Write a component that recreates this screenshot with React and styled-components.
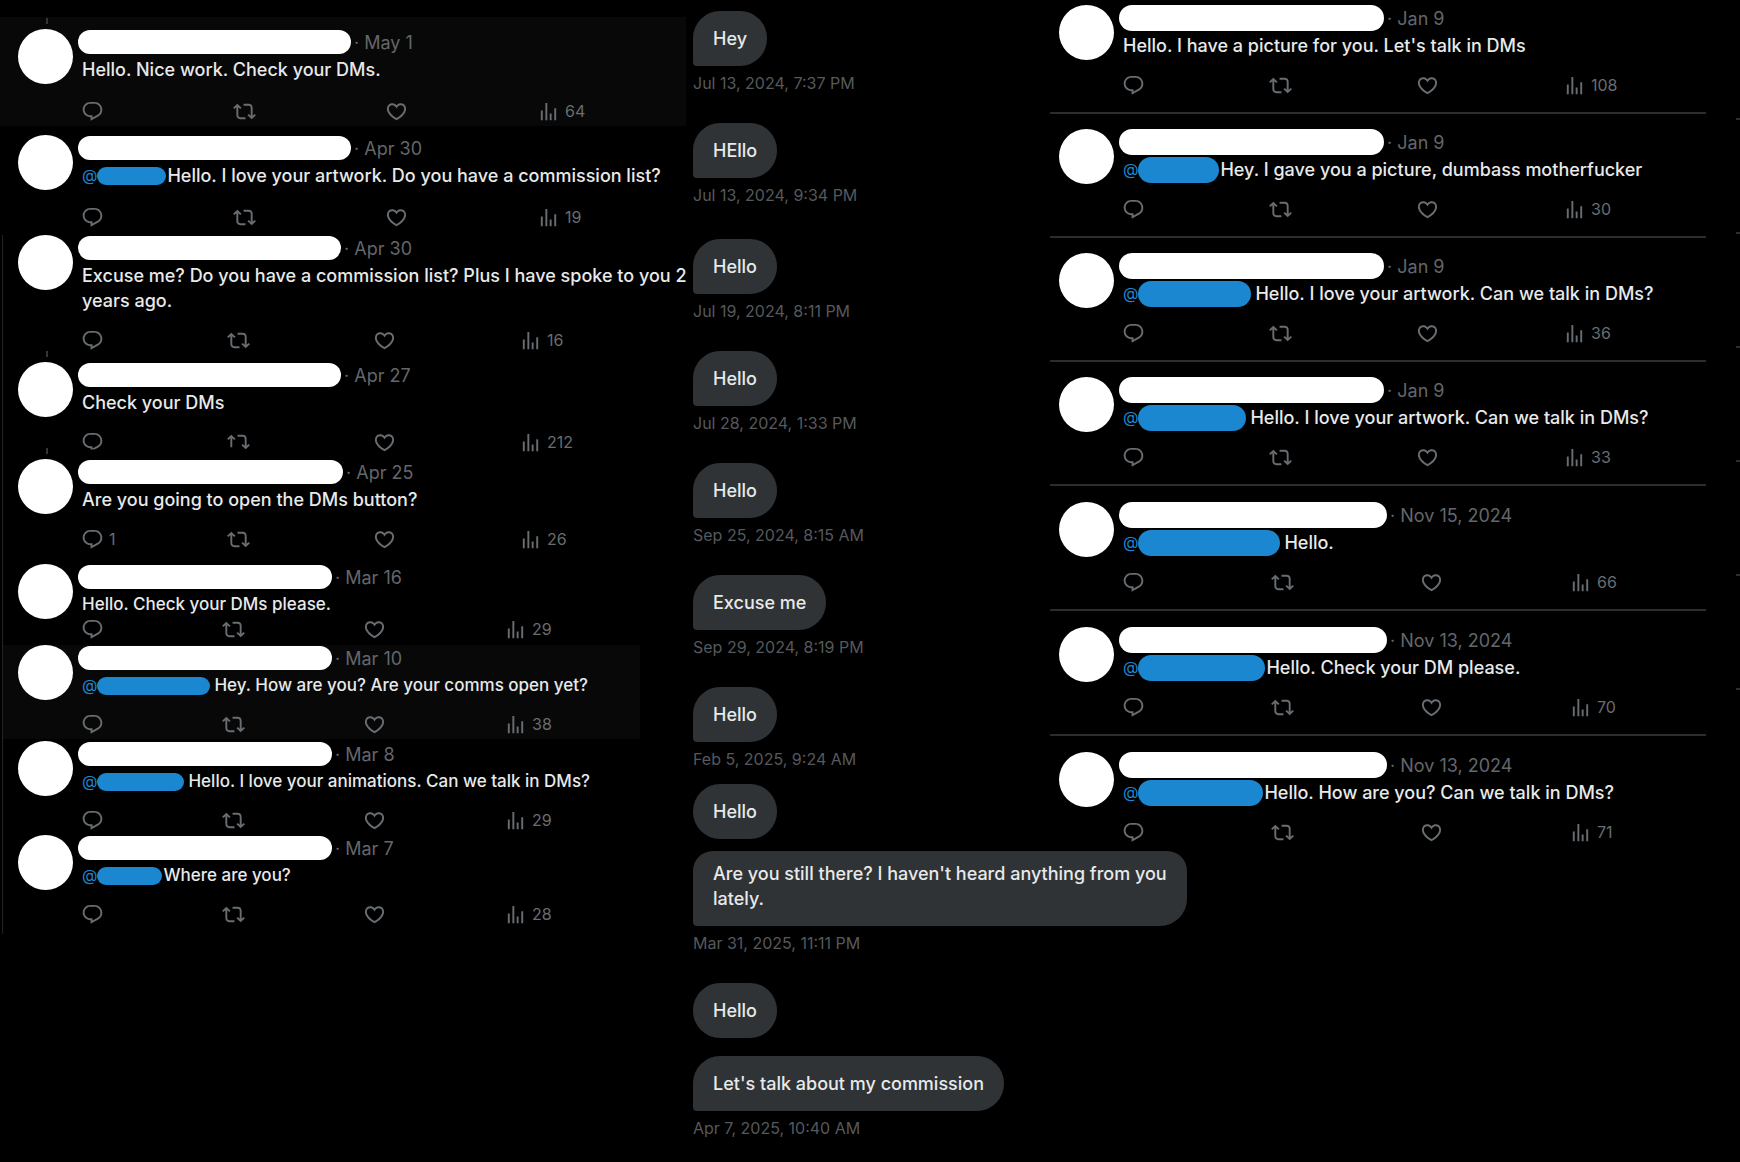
import React from 'react'
import styled, { createGlobalStyle, css } from 'styled-components';

const GlobalStyle = createGlobalStyle`
  * {
    box-sizing: border-box;
  }

  body {
    margin: 0;
    background: #000;
    color: #e7e9ea;
    font-family: Inter, "Liberation Sans", sans-serif;
  }
`;

const Page = styled.main`
  display: grid;
  grid-template-columns: minmax(0, 686fr) minmax(0, 357fr) minmax(0, 663fr) 34px;
  align-items: start;
  min-height: 100vh;
  overflow: hidden;
`;

const Thread = styled.section`
  display: flex;
  flex-direction: column;
  padding-top: 17px;
`;

const ReplyList = styled.section`
  display: flex;
  flex-direction: column;
  padding: 5px 0 0 7px;
`;

/* thin rule left of the older replies */
const Rail = styled.div`
  display: flex;
  flex-direction: column;
  margin-left: 2px;
  padding-bottom: 5px;
  border-left: 1px solid #202327;
`;

const TweetRow = styled.article`
  display: flex;
  align-items: flex-start;
  padding: ${props => props.$top || 0}px 0 3px ${props => props.$left}px;
  margin-bottom: ${props => props.$after || 0}px;
  margin-right: ${props => props.$short ? "46px" : "0"};
  background: ${props => props.$lit ? "#080808" : "transparent"};
  font-size: ${props => props.$size}px;
  font-weight: 500;

  ${props => props.$divided && css`
    padding-bottom: 15px;
    border-bottom: 2px solid #2a2e31;
  `}
`;

const Avatar = styled.div`
  position: relative;
  flex: none;
  width: 55px;
  height: 55px;
  margin-right: 5px;
  border-radius: 50%;
  background: #fff;

  ${props => props.$linked && css`
    &::before {
      content: "";
      position: absolute;
      left: 28px;
      bottom: 60px;
      width: 2px;
      height: 6px;
      background: #333639;
    }
  `}
`;

const Body = styled.div`
  flex: 1;
  min-width: 0;
`;

const Header = styled.header`
  display: flex;
  align-items: center;
  gap: 3px;
  height: 26px;
  margin-bottom: 2px;
`;

const NameBar = styled.span`
  width: ${props => props.$width}px;
  height: ${props => props.$tall ? "26px" : "24px"};
  border-radius: 13px;
  background: #fff;
`;

const Posted = styled.time`
  color: #63676b;
  font-size: 18px;
  font-weight: 400;
`;

const Text = styled.p`
  margin: 0 -6px 0 0;
  padding-left: 4px;
  line-height: 25px;
`;

const Mention = styled.a`
  display: inline-flex;
  align-items: center;
  height: 25px;
  margin-right: ${props => props.$spaced ? "4px" : "1px"};
  vertical-align: top;
  color: #1a87d0;
  font-size: 16px;
  font-weight: 400;
  text-decoration: none;
`;

const MentionBar = styled.span`
  width: ${props => props.$width}px;
  height: ${props => props.$tall ? "26px" : "18px"};
  border-radius: 13px;
  background: #1a87d0;
`;

const Actions = styled.div`
  display: grid;
  grid-template-columns: repeat(3, ${props => props.$step}px) auto;
  height: 24px;
  margin-top: ${props => props.$space}px;
  padding-left: 3px;
`;

const Action = styled.button`
  display: flex;
  align-items: center;
  gap: 5px;
  padding: 0;
  border: 0;
  background: none;
  color: #686d71;
  font-family: inherit;
  font-size: 16px;
  cursor: pointer;
`;

const Icon = styled.svg`
  width: 23px;
  height: 23px;
  fill: currentColor;
  clip-path: ${props => props.$cut ? "inset(0 0 4px 0)" : "none"};
`;

const Messages = styled.section`
  display: flex;
  flex-direction: column;
  align-items: flex-start;
  padding: 11px 0 0 7px;
`;

const Message = styled.div`
  margin-bottom: ${props => props.$after}px;
`;

const Bubble = styled.p`
  width: max-content;
  max-width: 494px;
  margin: 0;
  padding: 15px 20px;
  border-radius: ${props => props.$tail ? "27px 27px 27px 4px" : "27px"};
  background: #2f3336;
  font-size: 18px;
  font-weight: 500;
  line-height: 25px;

  ${props => props.$wide && css`
    padding-top: 10px;
    border-radius: 20px 20px 27px 4px;
  `}
`;

const Stamp = styled.time`
  display: block;
  padding-top: 7px;
  color: #55595d;
  font-size: 16px;
  line-height: 20px;
`;

const Edge = styled.div`
  display: flex;
  flex-direction: column;
  align-items: flex-end;
  gap: 112px;
  padding-top: 118px;
`;

const Tick = styled.span`
  width: 4px;
  height: 2px;
  background: #2a2e31;
`;

const icons = {
  reply: "M1.751 10c0-4.42 3.584-8 8.005-8h4.366c4.49 0 8.129 3.64 8.129 8.13 0 2.96-1.607 5.68-4.196 7.11l-8.054 4.46v-3.69h-.067c-4.49.1-8.183-3.51-8.183-8.01zm8.005-6c-3.317 0-6.005 2.69-6.005 6 0 3.37 2.77 6.08 6.138 6.01l.351-.01h1.761v2.3l5.087-2.81c1.951-1.08 3.163-3.13 3.163-5.36 0-3.39-2.744-6.13-6.129-6.13H9.756z",
  repost: "M4.5 3.88l4.432 4.14-1.364 1.46L5.5 7.55V16c0 1.1.896 2 2 2H13v2H7.5c-2.209 0-4-1.79-4-4V7.55L1.432 9.48.068 8.02 4.5 3.88zM16.5 6H11V4h5.5c2.209 0 4 1.79 4 4v8.45l2.068-1.93 1.364 1.46-4.432 4.14-4.432-4.14 1.364-1.46 2.068 1.93V8c0-1.1-.896-2-2-2z",
  repostCut: "M4.5 3.88l4.432 4.14-1.364 1.46L5.5 7.55V17h-2V7.55L1.432 9.48.068 8.02 4.5 3.88zM16.5 6H11V4h5.5c2.209 0 4 1.79 4 4v7.45l2.068-1.93 1.364 1.46-4.432 4.14-4.432-4.14 1.364-1.46 2.068 1.93V8c0-1.1-.896-2-2-2z",
  like: "M16.697 5.5c-1.222-.06-2.679.51-3.89 2.16l-.805 1.09-.806-1.09C9.984 6.01 8.526 5.44 7.304 5.5c-1.243.07-2.349.78-2.91 1.91-.552 1.12-.633 2.78.479 4.82 1.074 1.97 3.257 4.27 7.129 6.61 3.87-2.34 6.052-4.64 7.126-6.61 1.111-2.04 1.03-3.7.477-4.82-.561-1.13-1.666-1.84-2.908-1.91zm4.187 7.69c-1.351 2.48-4.001 5.12-8.379 7.67l-.503.3-.504-.3c-4.379-2.55-7.029-5.19-8.382-7.67-1.36-2.5-1.41-4.86-.514-6.67.887-1.79 2.647-2.91 4.601-3.01 1.651-.09 3.368.56 4.798 2.01 1.429-1.45 3.146-2.1 4.796-2.01 1.954.1 3.714 1.22 4.601 3.01.896 1.81.846 4.17-.514 6.67z",
  views: "M8.75 21V3h2v18h-2zM18 21V8.5h2V21h-2zM4 21l.004-10h2L6 21H4zm9.248 0v-7h2v7h-2z",
};

const latest = [
  { date: "May 1", name: 273, text: "Hello. Nice work. Check your DMs.", views: 64, step: 152, space: 17, top: 12, after: 9, lit: true, linked: true },
  { date: "Apr 30", name: 273, mention: 69, text: "Hello. I love your artwork. Do you have a commission list?", views: 19, step: 152, space: 17, after: 3 },
];

const older = [
  { date: "Apr 30", name: 263, text: "Excuse me? Do you have a commission list? Plus I have spoke to you 2 years ago.", views: 16, step: 146, after: 7 },
  { date: "Apr 27", name: 263, text: "Check your DMs", views: 212, step: 146, after: 2, linked: true, cut: true },
  { date: "Apr 25", name: 265, text: "Are you going to open the DMs button?", replies: 1, views: 26, step: 146, after: 10, linked: true },
  { date: "Mar 16", name: 254, text: "Hello. Check your DMs please.", views: 29, step: 141, space: 0, size: 17, after: 1 },
  { date: "Mar 10", name: 254, mention: 113, spaced: true, text: "Hey. How are you? Are your comms open yet?", views: 38, step: 141, space: 14, size: 17, after: 2, lit: true, short: true },
  { date: "Mar 8", name: 254, mention: 87, spaced: true, text: "Hello. I love your animations. Can we talk in DMs?", views: 29, step: 141, space: 14, size: 17 },
  { date: "Mar 7", name: 254, mention: 65, text: "Where are you?", views: 28, step: 141, space: 14, size: 17 },
];

const replies = [
  { date: "Jan 9", name: 265, text: "Hello. I have a picture for you. Let's talk in DMs", views: 108, step: 147 },
  { date: "Jan 9", name: 265, mention: 81, text: "Hey. I gave you a picture, dumbass motherfucker", views: 30, step: 147, top: 15 },
  { date: "Jan 9", name: 265, mention: 113, spaced: true, text: "Hello. I love your artwork. Can we talk in DMs?", views: 36, step: 147, top: 15 },
  { date: "Jan 9", name: 265, mention: 108, spaced: true, text: "Hello. I love your artwork. Can we talk in DMs?", views: 33, step: 147, top: 15 },
  { date: "Nov 15, 2024", name: 268, mention: 142, spaced: true, text: "Hello.", views: 66, step: 149, top: 16 },
  { date: "Nov 13, 2024", name: 268, mention: 127, text: "Hello. Check your DM please.", views: 70, step: 149, top: 16 },
  { date: "Nov 13, 2024", name: 268, mention: 125, text: "Hello. How are you? Can we talk in DMs?", views: 71, step: 149, top: 16 },
];

const messages = [
  { text: "Hey", sent: "Jul 13, 2024, 7:37 PM", after: 30 },
  { text: "HEllo", sent: "Jul 13, 2024, 9:34 PM", after: 34 },
  { text: "Hello", sent: "Jul 19, 2024, 8:11 PM", after: 30 },
  { text: "Hello", sent: "Jul 28, 2024, 1:33 PM", after: 30 },
  { text: "Hello", sent: "Sep 25, 2024, 8:15 AM", after: 30 },
  { text: "Excuse me", sent: "Sep 29, 2024, 8:19 PM", after: 30 },
  { text: "Hello", sent: "Feb 5, 2025, 9:24 AM", after: 15 },
  { text: "Hello", after: 12 },
  { text: "Are you still there? I haven't heard anything from you lately.", sent: "Mar 31, 2025, 11:11 PM", after: 30 , wide: true },
  { text: "Hello", after: 18 },
  { text: "Let's talk about my commission", sent: "Apr 7, 2025, 10:40 AM", after: 0 },
];

const TweetAction = ({ label, icon, count, cut }) => (
  <Action type="button" aria-label={label}>
    <Icon viewBox="0 0 24 24" aria-hidden="true" $cut={cut}>
      <path d={icons[icon]} />
    </Icon>
    {count && <span>{count}</span>}
  </Action>
)

const Tweet = ({ tweet, left, tall, divided }) => (
  <TweetRow
    $left={left}
    $size={tweet.size || 18}
    $top={tweet.top}
    $after={tweet.after}
    $lit={tweet.lit}
    $short={tweet.short}
    $divided={divided}
  >
    <Avatar $linked={tweet.linked} />
    <Body>
      <Header>
        <NameBar $width={tweet.name} $tall={tall} />
        <Posted>· {tweet.date}</Posted>
      </Header>
      <Text>
        {tweet.mention && (
          <Mention href="#" $spaced={tweet.spaced}>
            @<MentionBar $width={tweet.mention} $tall={tall} />
          </Mention>
        )}
        {tweet.text}
      </Text>
      <Actions $step={tweet.step} $space={tweet.space ?? 15}>
        <TweetAction label="Reply" icon="reply" count={tweet.replies} cut={tweet.cut} />
        <TweetAction label="Repost" icon={tweet.cut ? "repostCut" : "repost"} />
        <TweetAction label="Like" icon="like" />
        <TweetAction label="Views" icon="views" count={tweet.views} />
      </Actions>
    </Body>
  </TweetRow>
)

export default function App() {
  return (
    <>
      <GlobalStyle />
      <Page>
        <Thread>
          {latest.map(tweet => <Tweet key={tweet.text} tweet={tweet} left={18} />)}
          <Rail>
            {older.map(tweet => <Tweet key={tweet.text} tweet={tweet} left={15} />)}
          </Rail>
        </Thread>
        <Messages>
          {messages.map((message, i) => (
            <Message key={i} $after={message.after}>
              <Bubble $tail={message.sent} $wide={message.wide}>{message.text}</Bubble>
              {message.sent && <Stamp>{message.sent}</Stamp>}
            </Message>
          ))}
        </Messages>
        <ReplyList>
          {replies.map((tweet, i) => (
            <Tweet key={i} tweet={tweet} left={9} tall divided={i < replies.length - 1} />
          ))}
        </ReplyList>
        <Edge>
          {[1, 2, 3, 4, 5, 6].map(n => <Tick key={n} />)}
        </Edge>
      </Page>
    </>
  )
}
